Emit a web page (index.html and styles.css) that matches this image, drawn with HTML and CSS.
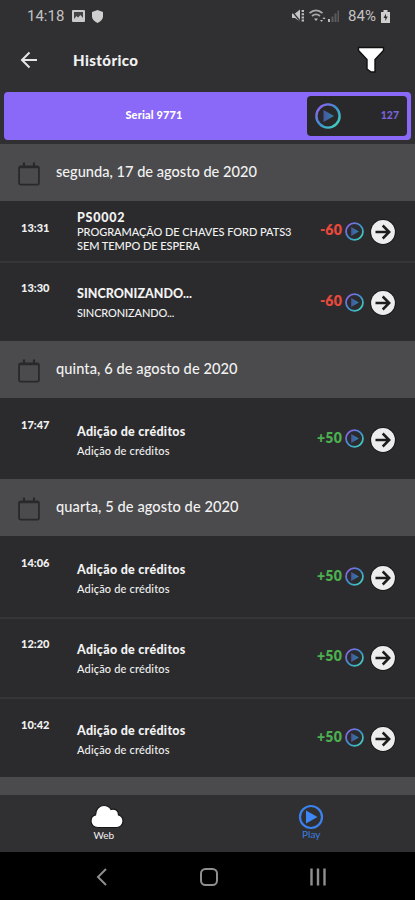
FILE: index.html
```html
<!DOCTYPE html>
<html lang="pt-BR">
<head>
<meta charset="utf-8">
<title>Histórico</title>
<link rel="stylesheet" href="styles.css">
</head>
<body>
<svg class="defs" width="0" height="0" aria-hidden="true">
  <defs>
    <linearGradient id="ring" x1="0" y1="0" x2="1" y2="1"><stop offset="0.1" stop-color="#8a66ee"/><stop offset="0.5" stop-color="#3e8fce"/><stop offset="0.9" stop-color="#42cfc0"/></linearGradient>
    <linearGradient id="tri" x1="0" y1="0" x2="1" y2="0"><stop offset="0" stop-color="#4a559e"/><stop offset="1" stop-color="#2a86ad"/></linearGradient>
    <symbol id="coin" viewBox="0 0 26 26"><circle cx="13" cy="13" r="11.6" fill="none" stroke="url(#ring)" stroke-width="2.4"/><path d="M8.5 7v12L19 13z" fill="url(#tri)"/></symbol>
    <symbol id="go" viewBox="0 0 26 26"><circle cx="13" cy="13" r="12.8" fill="#141415"/><circle cx="13" cy="13" r="11.9" fill="#ededed"/><path d="M5.500 13h13.500M12.700 6.500l6.500 6.500-6.500 6.500" fill="none" stroke="#1d1d1e" stroke-width="2.500"/></symbol>
    <symbol id="cal" viewBox="0 0 22 24"><rect x="1.1" y="4.300" width="19.800" height="18.400" rx="1.600" fill="none" stroke="#29292b" stroke-width="1.800"/><path d="M1 5.200h20M6 .5v4M16 .5v4" stroke="#29292b" stroke-width="2.200"/></symbol>
  </defs>
</svg>
<div class="app">
  <div class="status">
    <span class="clock">14:18</span>
    <svg class="s-pic" width="13" height="12" viewBox="0 0 13 12"><rect width="13" height="12" rx="1" fill="#c9c9c9"/><path d="M2 2h9v6L8.500 5 6 7.500 4.500 6 2 9z" fill="#444446"/></svg>
    <svg class="s-shield" width="11" height="13" viewBox="0 0 11 13"><path d="M5.500 0 11 2v4.500c0 3-2.500 5-5.500 6.500C2.500 11.500 0 9.500 0 6.500V2z" fill="#cfcfcf"/></svg>
    <svg class="s-right" width="50" height="14" viewBox="0 0 50 14"><path d="M1 4.500h3L9 .5v12L4 9H1z" fill="#c4c4c4"/><path d="M0 1l9 11" stroke="#303032" stroke-width="1.200"/><path d="M11.800 1v12" stroke="#bdbdbd" stroke-width="2.400" stroke-dasharray="2 1.200"/><path d="M18.500 4.200c4-3.600 9-3.600 13 0M21 7c2.500-2 5.500-2 8 0" fill="none" stroke="#aaa" stroke-width="1.800"/><path d="M23 9.500h4l-2 2.500z" fill="#bbb"/><path d="M29 11l1.500 2L32 11zM31.500 10l1.500-2 1.500 2z" fill="#bbb"/><path d="M37 10h2v3h-2z" fill="#bbb"/><path d="M40.500 7.500h2V13h-2zM43.500 4.500h2V13h-2zM46.500 1.500h1.500V13h-1.500z" fill="#5b5b5d"/></svg>
    <span class="pct">84%</span>
    <svg class="s-bat" width="9" height="13" viewBox="0 0 9 13"><path d="M2.500 0h4v2H9v11H0V2h2.500z" fill="#cfcfcf"/><path d="M5 3.500 2.500 8h1.800v3L6.800 6.500H5z" fill="#303032"/></svg>
  </div>
  <header class="bar">
    <svg class="back" width="18" height="18" viewBox="0 0 18 18"><path d="M17 9H2M9.500 1.500 2 9l7.500 7.500" fill="none" stroke="#e6e6e6" stroke-width="2"/></svg>
    <h1>Histórico</h1>
    <svg class="filter" width="28" height="28" viewBox="0 0 28 28"><path d="M1.500 1.500h25v3L18 13.500V26h-4l-4-3v-9.500L1.500 4.500z" fill="#fff" stroke="#111" stroke-width="1.400"/></svg>
  </header>
  <section class="serial">
    <div class="serial-name">Serial 9771</div>
    <div class="balance"><svg width="26" height="26"><use href="#coin"/></svg><span>127</span></div>
  </section>
  <main>
    <div class="day"><svg width="22" height="24"><use href="#cal"/></svg><span>segunda, 17 de agosto de 2020</span></div>
    <div class="row first"><time>13:31</time><div class="info"><b class="code">PS0002</b><p class="caps">PROGRAMAÇÃO DE CHAVES FORD PATS3<br>SEM TEMPO DE ESPERA</p></div><span class="amt neg">-60</span><svg class="coin" width="19" height="19"><use href="#coin"/></svg><svg class="go" width="26" height="26"><use href="#go"/></svg></div>
    <div class="row line syncing"><time>13:30</time><div class="info"><b class="sync">SINCRONIZANDO...</b><p class="caps sync-sub">SINCRONIZANDO...</p></div><span class="amt neg">-60</span><svg class="coin" width="19" height="19"><use href="#coin"/></svg><svg class="go" width="26" height="26"><use href="#go"/></svg></div>
    <div class="day short"><svg width="22" height="24"><use href="#cal"/></svg><span>quinta, 6 de agosto de 2020</span></div>
    <div class="row tall"><time>17:47</time><div class="info"><b>Adição de créditos</b><p>Adição de créditos</p></div><span class="amt">+50</span><svg class="coin" width="19" height="19"><use href="#coin"/></svg><svg class="go" width="26" height="26"><use href="#go"/></svg></div>
    <div class="day short"><svg width="22" height="24"><use href="#cal"/></svg><span>quarta, 5 de agosto de 2020</span></div>
    <div class="row tall"><time>14:06</time><div class="info"><b>Adição de créditos</b><p>Adição de créditos</p></div><span class="amt">+50</span><svg class="coin" width="19" height="19"><use href="#coin"/></svg><svg class="go" width="26" height="26"><use href="#go"/></svg></div>
    <div class="row line"><time>12:20</time><div class="info"><b>Adição de créditos</b><p>Adição de créditos</p></div><span class="amt">+50</span><svg class="coin" width="19" height="19"><use href="#coin"/></svg><svg class="go" width="26" height="26"><use href="#go"/></svg></div>
    <div class="row line last"><time>10:42</time><div class="info"><b>Adição de créditos</b><p>Adição de créditos</p></div><span class="amt">+50</span><svg class="coin" width="19" height="19"><use href="#coin"/></svg><svg class="go" width="26" height="26"><use href="#go"/></svg></div>
    <div class="peek"></div>
  </main>
  <nav class="tabs">
    <div class="tab web"><svg width="34" height="25" viewBox="0 0 34 25"><path d="M8 23.500C3.500 23.500 1 20.500 1 17c0-3 2-5.400 4.500-6C5.500 5 9.500 1.500 14 1.500c3 0 5.500 1.500 7 4 4-1.500 7.500 1 7.500 5.500 3 1 4.500 3.500 4.500 6 0 3.500-2.500 6.500-6.500 6.500z" fill="#fff" stroke="#161617" stroke-width="1.200"/></svg><span>Web</span></div>
    <div class="tab play"><svg width="26" height="26" viewBox="0 0 26 26"><circle cx="13" cy="13" r="11" fill="none" stroke="#3b82ee" stroke-width="2.200"/><path d="M8 6.500v13L19.500 13z" fill="#3f87f5"/></svg><span>Play</span></div>
  </nav>
  <div class="sysnav">
    <svg width="12" height="18" viewBox="0 0 12 18"><path d="M10 1 2 9l8 8" fill="none" stroke="#8f8f8f" stroke-width="2"/></svg>
    <svg width="18" height="18" viewBox="0 0 18 18"><rect x="1" y="1" width="16" height="16" rx="4.500" fill="none" stroke="#8f8f8f" stroke-width="2"/></svg>
    <svg width="18" height="18" viewBox="0 0 18 18"><path d="M2.500 .5v17M9 .5v17M15.500 .5v17" stroke="#8f8f8f" stroke-width="2.400"/></svg>
  </div>
</div>
</body>
</html>
```
FILE: styles.css
```css
* { box-sizing: border-box; }
body { margin: 0; background: #000; color: #f2f2f2; font-family: Lato, "Liberation Sans", sans-serif; }
svg { display: block; flex: none; }
.defs { position: absolute; }
.app { width: 415px; height: 900px; display: flex; flex-direction: column; background: #303032; overflow: hidden; white-space: nowrap; }

.status { height: 30px; display: flex; align-items: center; padding: 2px 25px 0 27px; font: 15px/18px Roboto, sans-serif; color: #c2c2c2; }
.clock { width: 45px; letter-spacing: 0; }
.s-shield { margin-left: 7px; }
.s-right { margin-left: auto; }
.pct { width: 32px; margin-left: 7px; letter-spacing: 0.1px; }
.s-bat { margin-left: 1px; }

.bar { height: 62px; display: flex; align-items: center; padding: 0 30px 3px 20px; }
h1 { margin: 0 auto 0 35px; font-size: 15px; line-height: 18px; font-weight: 900; letter-spacing: 0.42px; }

.serial { height: 48px; margin: 0 4px 4px; padding: 4px; border-radius: 4px; background: #8a68f8; display: flex; }
.serial-name { flex: 1; padding-right: 7px; text-align: center; font-size: 11px; line-height: 38px; font-weight: 900; letter-spacing: 0.15px; color: #fff; }
.balance { width: 100px; border-radius: 4px; background: #29292b; display: flex; align-items: center; justify-content: space-between; padding: 0 8px; font-size: 10.5px; font-weight: 900; color: #7963d8; }
.balance span { margin-top: -3px; }

main { display: flex; flex-direction: column; }
.day { height: 57px; display: flex; align-items: center; gap: 16px; padding: 0 18px 1px; background: #4b4b4d; font-size: 14.6px; }
.day svg { margin-top: 3px; }
.day span { line-height: 20px; font-weight: 500; margin-top: -1px; }
.day.short span { letter-spacing: 0.08px; }
.row { height: 80px; display: flex; align-items: center; padding: 0 19px 0 21px; background: #2b2b2d; }
.row.first { height: 60px; }
.row.tall { height: 81px; }
.row.line { box-shadow: inset 0 2px #363638; }
.row.last { padding-top: 1px; }
time { width: 56px; align-self: flex-start; padding-top: 20px; font-size: 11px; line-height: 14px; font-weight: 900; }
.info { flex: 1; padding-top: 4px; }
.info b { display: block; font-size: 12.5px; line-height: 16px; font-weight: 900; letter-spacing: 0.28px; }
.info p { margin: 4px 0 0; font-size: 11px; line-height: 14px; font-weight: 500; letter-spacing: 0.17px; }
.info b.sync { letter-spacing: 0.03px; }
.info b.code { letter-spacing: 0.75px; }
.info p.caps { letter-spacing: -0.05px; }
.info p.sync-sub { letter-spacing: -0.13px; }
.first .info { padding-top: 0; }
.first .info b { line-height: 15px; }
.first .info p { margin: 0; }
.amt { font-size: 14px; line-height: 18px; font-weight: 800; letter-spacing: 0.2px; color: #4caf50; margin: 0 4px 2px 0; }
.neg { color: #e8493c; }
.coin { margin-left: -1px; }
.go { margin: 2px 0 0 6px; }
.syncing .amt { margin-bottom: 0; }
.syncing .coin { margin-top: 2px; }
.syncing .go { margin-top: 4px; }
.peek { height: 18px; background: #4b4b4d; }

.tabs { height: 57px; display: flex; padding-top: 9px; }
.tab { flex: 1; display: flex; flex-direction: column; align-items: center; font-size: 10px; line-height: 11px; }
.web svg { margin-left: 7px; }
.web span { margin-top: 1px; }
.play { color: #3b7fe0; }
.play span { margin-top: -1px; }
.sysnav { flex: 1; display: flex; align-items: center; justify-content: space-between; padding: 2px 88px 0 96px; background: #000; }
```
